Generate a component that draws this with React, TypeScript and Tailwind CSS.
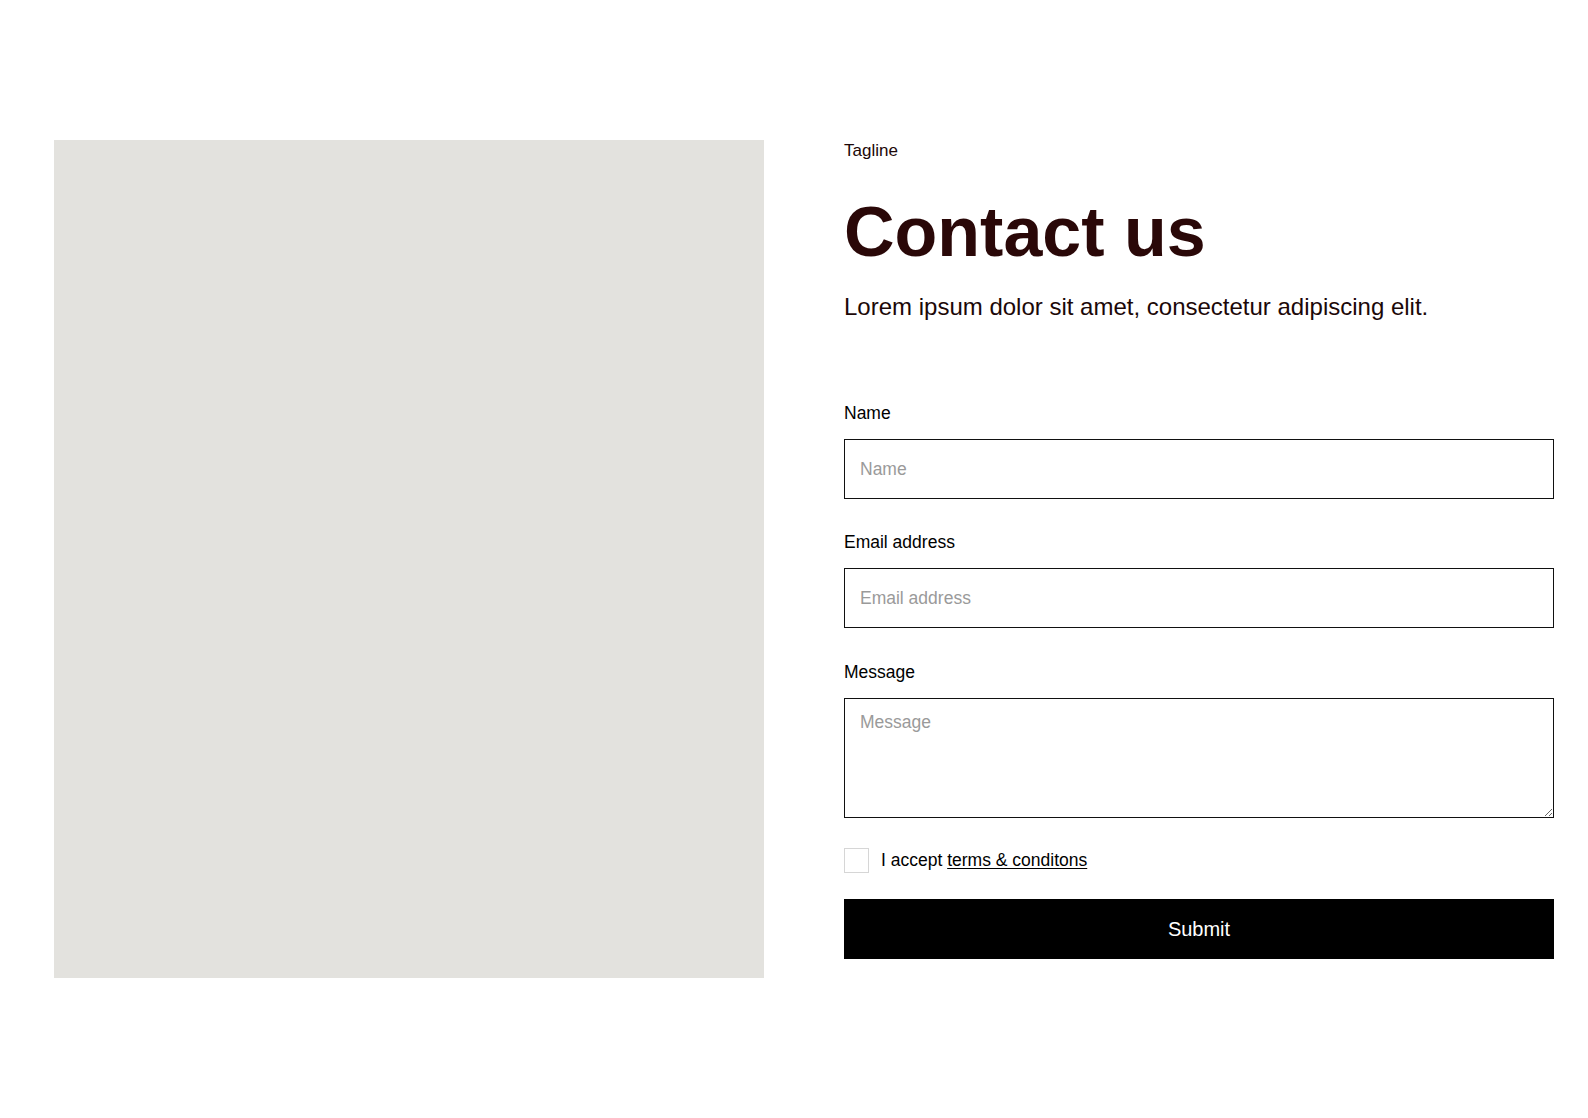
import React from "react";

export default function App() {
  return (
    <div
      className="min-h-screen bg-white"
      style={{ fontFamily: '"Liberation Sans", Arial, sans-serif' }}
    >
      <div className="flex items-start gap-[80px] py-[140px] pl-[54px]">
        <div className="h-[838px] w-[710px] shrink-0 bg-[#e3e2de]" />
        <div className="flex w-[710px] shrink-0 flex-col pt-[1px]">
          <p className="text-[17px] leading-[20px] text-[#1c0808]">Tagline</p>
          <h1 className="mt-[36px] text-[70px] font-bold leading-none text-[#2a0808]">
            Contact us
          </h1>
          <p className="mt-[22px] text-[24px] leading-[36px] text-[#1c0808]">
            Lorem ipsum dolor sit amet, consectetur adipiscing elit.
          </p>
          <form className="mt-[76px] flex flex-col" onSubmit={(e) => e.preventDefault()}>
            <label className="flex flex-col">
              <span className="text-[17.5px] leading-[24px] text-black">Name</span>
              <input
                type="text"
                placeholder="Name"
                className="mt-[14px] h-[60px] w-full border border-[#111] px-[15px] text-[17.5px] text-black outline-none placeholder:text-[#9a9a9a]"
              />
            </label>
            <label className="mt-[31px] flex flex-col">
              <span className="text-[17.5px] leading-[24px] text-black">Email address</span>
              <input
                type="email"
                placeholder="Email address"
                className="mt-[14px] h-[60px] w-full border border-[#111] px-[15px] text-[17.5px] text-black outline-none placeholder:text-[#9a9a9a]"
              />
            </label>
            <label className="mt-[32px] flex flex-col">
              <span className="text-[17.5px] leading-[24px] text-black">Message</span>
              <textarea
                placeholder="Message"
                className="mt-[14px] h-[120px] w-full border border-[#111] px-[15px] py-[12px] text-[17.5px] leading-[22px] text-black outline-none placeholder:text-[#9a9a9a]"
              />
            </label>
            <div className="mt-[30px] flex h-[24px] items-center gap-[12px]">
              <input
                type="checkbox"
                className="h-[25px] w-[25px] shrink-0 appearance-none border border-[#d6d6d6] bg-white"
              />
              <span className="text-[17.5px] leading-[24px] text-black">
                I accept{" "}
                <a href="#" className="underline underline-offset-2">
                  terms &amp; conditons
                </a>
              </span>
            </div>
            <button
              type="submit"
              className="mt-[27px] h-[60px] w-full bg-black text-[20px] text-white"
            >
              Submit
            </button>
          </form>
        </div>
      </div>
    </div>
  );
}
